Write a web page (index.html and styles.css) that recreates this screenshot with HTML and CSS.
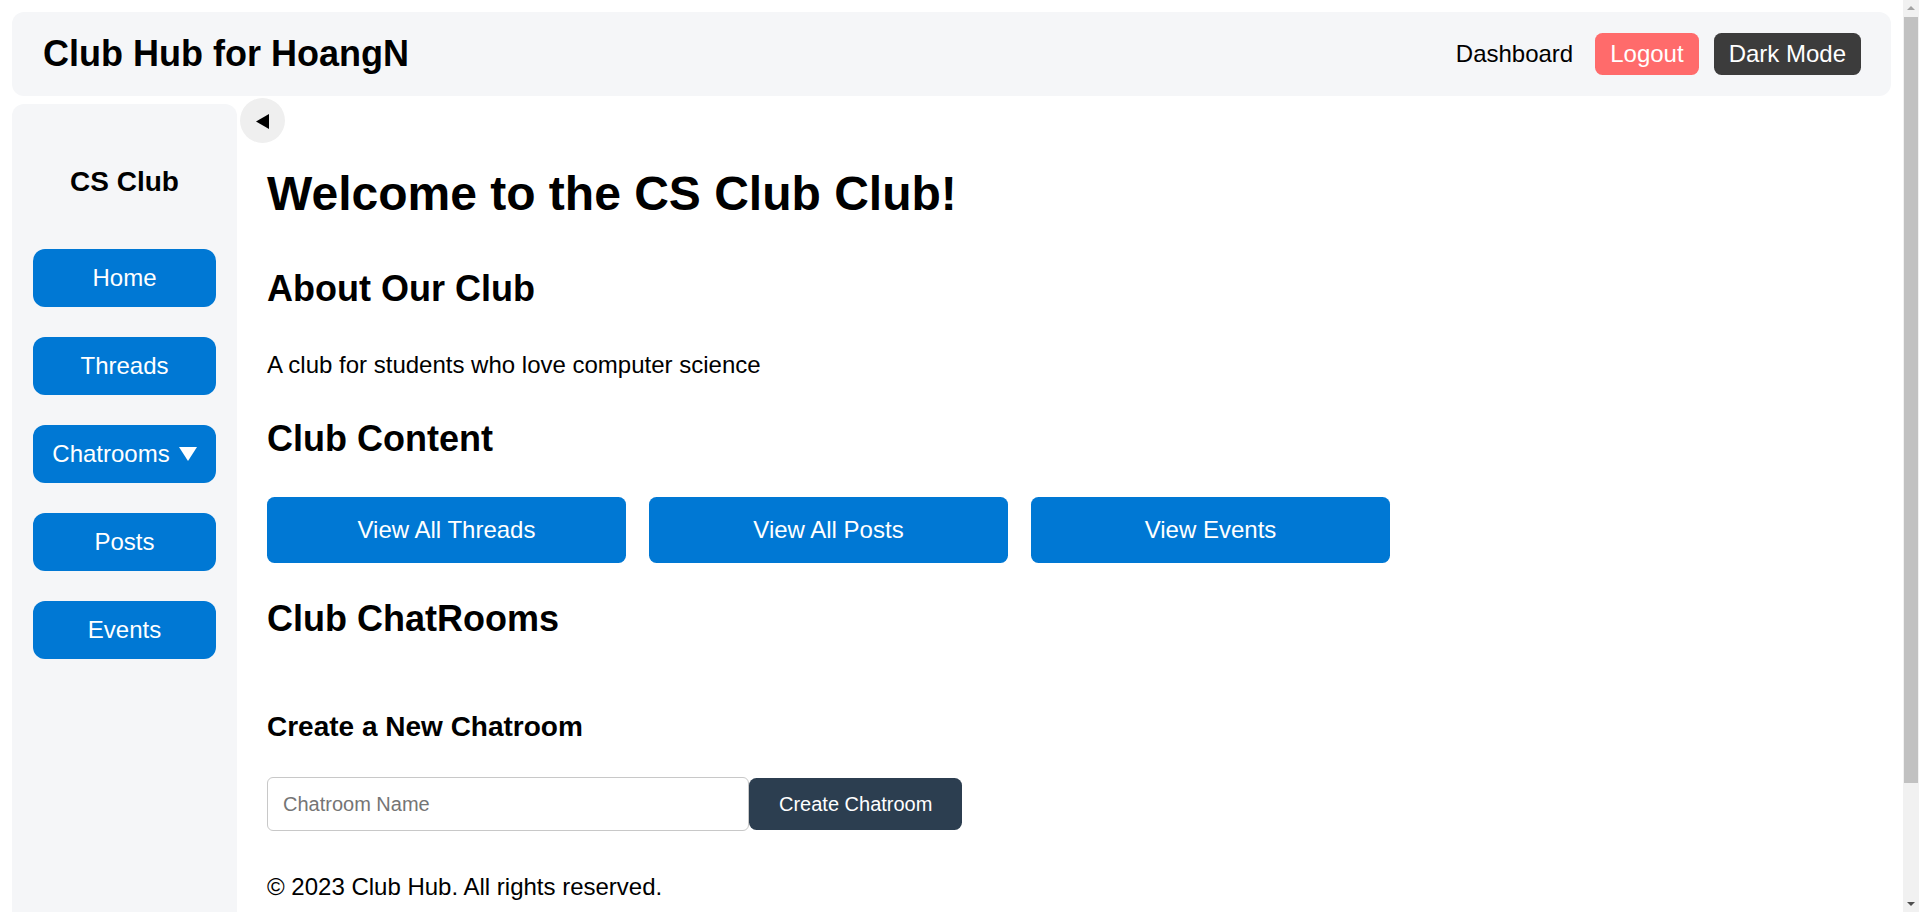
FILE: index.html
```html
<!DOCTYPE html>
<html lang="en">
<head>
<meta charset="utf-8">
<title>Club Hub</title>
<link rel="stylesheet" href="styles.css">
</head>
<body>
<div class="page">
  <header class="topbar">
    <h1 class="brand">Club Hub for HoangN</h1>
    <nav class="topnav">
      <a class="nav-link" href="#">Dashboard</a>
      <button class="btn-logout">Logout</button>
      <button class="btn-dark">Dark Mode</button>
    </nav>
  </header>
  <div class="layout">
    <aside class="sidebar">
      <h3 class="club-name">CS Club</h3>
      <ul class="side-menu">
        <li><a class="side-btn" href="#">Home</a></li>
        <li><a class="side-btn" href="#">Threads</a></li>
        <li><a class="side-btn" href="#">Chatrooms <svg class="caret" width="18" height="14" viewBox="0 0 18 14"><polygon points="0,0 18,0 9,14" fill="#fff"/></svg></a></li>
        <li><a class="side-btn" href="#">Posts</a></li>
        <li><a class="side-btn" href="#">Events</a></li>
      </ul>
    </aside>
    <main class="content">
      <button class="toggle" aria-label="Collapse sidebar"><svg width="14" height="15" viewBox="0 0 14 15"><polygon points="0,7.5 13,0 13,15" fill="#000"/></svg></button>
      <h1 class="welcome">Welcome to the CS Club Club!</h1>
      <section class="about">
        <h2 class="section-title">About Our Club</h2>
        <p class="about-text">A club for students who love computer science</p>
      </section>
      <section class="club-content">
        <h2 class="section-title">Club Content</h2>
        <div class="content-links">
          <a class="content-btn" href="#">View All Threads</a>
          <a class="content-btn" href="#">View All Posts</a>
          <a class="content-btn" href="#">View Events</a>
        </div>
      </section>
      <section class="chatrooms">
        <h2 class="section-title">Club ChatRooms</h2>
        <div class="create-chatroom">
          <h3 class="create-title">Create a New Chatroom</h3>
          <form class="create-form">
            <input class="chat-input" type="text" placeholder="Chatroom Name">
            <button class="create-btn" type="button">Create Chatroom</button>
          </form>
        </div>
      </section>
      <footer class="footer">© 2023 Club Hub. All rights reserved.</footer>
    </main>
  </div>
</div>
<div class="fake-scrollbar" aria-hidden="true">
  <svg class="sb-arrow sb-up" width="16" height="16" viewBox="0 0 16 16"><polygon points="4,10 12,10 8,6" fill="#a3a3a3"/></svg>
  <div class="sb-thumb"></div>
  <svg class="sb-arrow sb-down" width="16" height="16" viewBox="0 0 16 16"><polygon points="4,6 12,6 8,10" fill="#505050"/></svg>
</div>
</body>
</html>
```
FILE: styles.css
```css
* { box-sizing: border-box; }
html, body { margin: 0; padding: 0; }
body {
  font-family: "Liberation Sans", Arial, sans-serif;
  font-size: 24px;
  color: #000;
  background: #fff;
}
.page { padding: 12px 28px 12px 12px; }

.topbar {
  height: 84px;
  background: #f5f6f8;
  border-radius: 12px;
  padding: 0 30px 0 31px;
  display: flex;
  align-items: center;
  justify-content: space-between;
}
.brand {
  margin: 0;
  font-size: 36px;
  font-weight: bold;
}
.topnav {
  display: flex;
  align-items: center;
  gap: 15px;
}
.nav-link {
  color: #000;
  text-decoration: none;
  font-size: 24px;
  margin-right: 7px;
}
.btn-logout, .btn-dark {
  font-family: inherit;
  font-size: 24px;
  color: #fff;
  border: none;
  border-radius: 7.5px;
  padding: 7.5px 15px;
  line-height: 27.6px;
}
.btn-logout { background: #ff6b6b; }
.btn-dark { background: #3c3c3c; }

.layout {
  display: flex;
  margin-top: 8px;
}
.sidebar {
  width: 225px;
  flex: 0 0 225px;
  min-height: 926px;
  background: #f5f6f8;
  border-radius: 12px;
  padding: 62px 21px 0;
}
.club-name {
  margin: 0;
  text-align: center;
  font-size: 28px;
  line-height: 32.5px;
}
.side-menu {
  list-style: none;
  margin: 50px 0 0;
  padding: 0;
  display: flex;
  flex-direction: column;
  gap: 30px;
}
.side-btn {
  display: flex;
  align-items: center;
  justify-content: center;
  gap: 9px;
  height: 58px;
  background: #0078d4;
  color: #fff;
  text-decoration: none;
  border-radius: 12px;
  font-size: 24px;
}
.caret { margin-top: 1px; }

.content {
  flex: 1;
  position: relative;
  padding: 30px 30px 30px 30px;
}
.toggle {
  position: absolute;
  left: 3px;
  top: -6px;
  width: 45px;
  height: 45px;
  border-radius: 50%;
  border: none;
  background: #efefef;
  padding: 0;
  display: flex;
  align-items: center;
  justify-content: center;
}
.toggle svg { margin-left: 0; margin-top: 2px; }

.welcome {
  margin: 32px 0 0;
  font-size: 48px;
  line-height: 55.2px;
}
.section-title {
  margin: 0;
  font-size: 36px;
  line-height: 41.4px;
}
.about { margin-top: 47px; }
.about-text {
  margin: 41px 0 0;
  line-height: 27.6px;
}
.club-content { margin-top: 40px; }
.content-links {
  margin-top: 37px;
  display: flex;
  gap: 23px;
}
.content-btn {
  width: 359px;
  height: 66px;
  display: flex;
  align-items: center;
  justify-content: center;
  background: #0078d4;
  color: #fff;
  text-decoration: none;
  border-radius: 7.5px;
  font-size: 24px;
}
.chatrooms { margin-top: 35px; }
.create-chatroom { margin-top: 72px; }
.create-title {
  margin: 0;
  font-size: 28px;
  line-height: 32.3px;
}
.create-form {
  margin-top: 34px;
  display: flex;
  align-items: center;
}
.chat-input {
  width: 482px;
  height: 54px;
  border: 1px solid #c8c8c8;
  border-radius: 6px;
  padding: 0 15px;
  font-family: inherit;
  font-size: 20px;
  color: #000;
  outline: none;
}
.chat-input::placeholder { color: #757575; }
.create-btn {
  height: 52px;
  padding: 0 30px;
  border: none;
  border-radius: 7.5px;
  background: #2c3e50;
  color: #fff;
  font-family: inherit;
  font-size: 20px;
}
.footer {
  margin-top: 42px;
  line-height: 27.6px;
}

.fake-scrollbar {
  position: fixed;
  top: 0;
  right: 0;
  width: 16px;
  height: 100vh;
  background: #f1f1f1;
}
.sb-arrow {
  position: absolute;
  left: 0;
  display: block;
}
.sb-up { top: 0; }
.sb-down { bottom: 0; }
.sb-thumb {
  position: absolute;
  top: 17px;
  left: 1px;
  width: 14px;
  height: 766px;
  background: #c1c1c1;
}
```
